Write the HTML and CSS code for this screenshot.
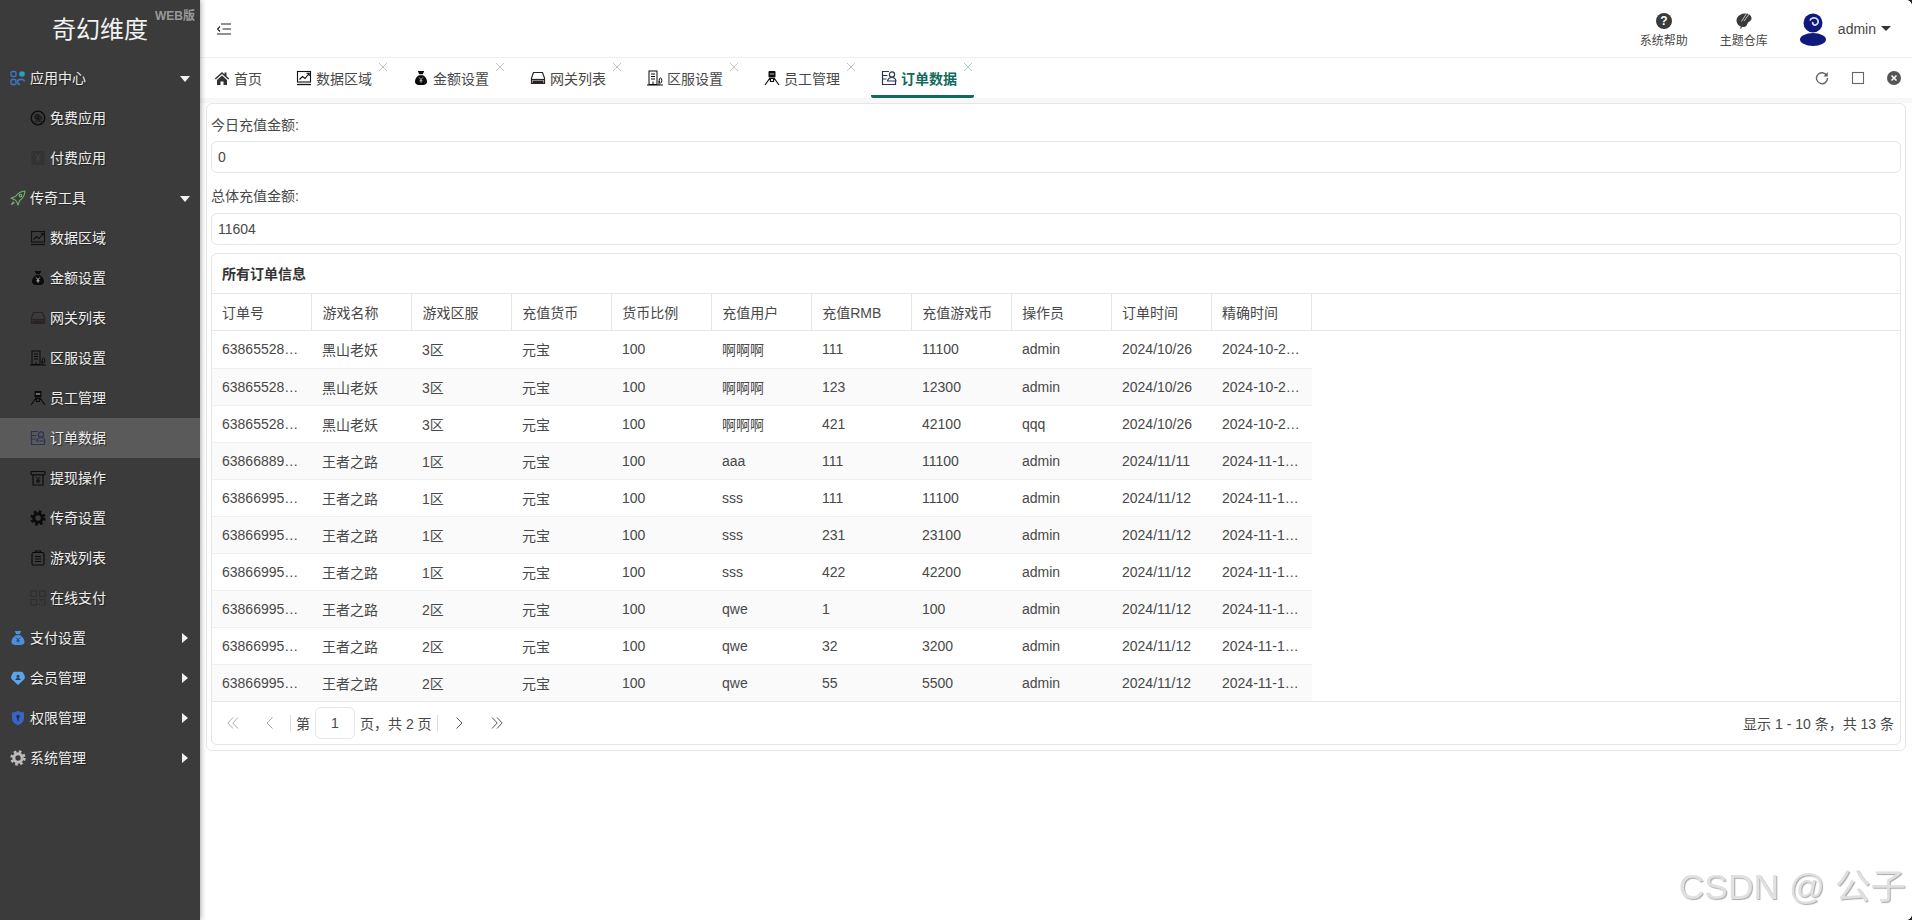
FILE: index.html
```html
<!DOCTYPE html>
<html lang="zh-CN">
<head>
    <meta charset="UTF-8">
    <title>奇幻维度 - 订单数据</title>
    <link rel="stylesheet" href="styles.css">
</head>
<body>
    <svg class="icon-defs" xmlns="http://www.w3.org/2000/svg">
        <symbol id="i-apps" viewBox="0 0 16 16"><g fill="none" stroke="#3d78c9" stroke-width="1.4"><rect x="1" y="1.5" width="5" height="5" rx="1.4"/><rect x="1" y="9.5" width="5" height="5" rx="1.4"/><path d="M10 14.5a2.5 2.5 0 0 1 0-5h2.5a2.5 2.5 0 0 1 2 2"/></g><circle cx="12" cy="4" r="2.8" fill="#2d9fc4"/></symbol>
        <symbol id="i-free" viewBox="0 0 16 16"><circle cx="8" cy="8" r="6.8" fill="none" stroke="#0b0b0b" stroke-width="1.3"/><text x="8" y="11" font-size="8.5" text-anchor="middle" fill="#0b0b0b">免</text></symbol>
        <symbol id="i-paid" viewBox="0 0 16 16"><rect x="1.5" y="1" width="13" height="14" fill="#333"/><path d="M5.5 4 8 7.5 10.500 4M8 7.500V12M5.800 9h4.400" fill="none" stroke="#444" stroke-width="1"/></symbol>
        <symbol id="i-rocket" viewBox="0 0 16 16"><g fill="none" stroke="#6fb56f" stroke-width="1.1" stroke-linejoin="round"><path d="M15 1c-4 .2-7 2-9.300 5.300L1 8.200l3.500 1.200 2.200 2.200L8 15l1.800-4.600C13 8 14.800 5 15 1z"/><circle cx="10.500" cy="5.500" r="1.300"/><path d="M3.500 11.500 1.500 14.500 4.500 12.500"/></g></symbol>
        <symbol id="i-chart" viewBox="0 0 16 16"><g fill="none" stroke="#111" stroke-width="1.100"><rect x="1.500" y="1.500" width="13" height="10.500"/><path d="M1 14.500h14" stroke-width="1.300"/><path d="M3.500 9.500 6.500 6.500 9 8.500 13 3.500M10.500 3.300 13.200 3.300 13.200 6"/></g></symbol>
        <symbol id="i-bag" viewBox="0 0 16 16"><path fill="#0c0c0c" d="M4.800 1h6.400L9.800 4.300H6.200zM6 5.200h4c2.600 1.600 4 4 4 6.200 0 2.800-2 3.600-6 3.600s-6-.8-6-3.600c0-2.200 1.400-4.600 4-6.200z"/><path d="M6.200 7.500 8 9.700l1.800-2.200M8 9.700v3M6.500 10.800h3" fill="none" stroke="#ddd" stroke-width=".8"/></symbol>
        <symbol id="i-drive" viewBox="0 0 16 16"><g fill="none" stroke="#2a2323" stroke-width="1.200"><path d="M3.500 2.500h9l2 5.500v5.500h-13V8z"/><path d="M1.500 9.500h13"/></g><rect x="2.500" y="10.500" width="11" height="2.500" fill="#2a2323"/></symbol>
        <symbol id="i-building" viewBox="0 0 16 16"><g fill="none" stroke="#0a0a0a" stroke-width="1"><rect x="2" y="1" width="8" height="13.500"/><path d="M0 15h16M4 4h4M4 6.500h4M4 9h4M6 11.500v3M12 15v-4"/><ellipse cx="13.500" cy="10.500" rx="1.300" ry="2.500"/></g></symbol>
        <symbol id="i-person" viewBox="0 0 16 16"><rect x="4.500" y="1" width="7" height="6.500" rx="1" fill="#0c0c0c"/><rect x="5.800" y="3" width="4.400" height="2" fill="#666"/><g fill="none" stroke="#0c0c0c" stroke-width="1.200"><path d="M6 8 1 15M10 8l5 7M6.500 8.500h3v3h-3z"/></g></symbol>
        <symbol id="i-order" viewBox="0 0 16 16"><g fill="none" stroke="#2b3350" stroke-width="1.200"><path d="M8 1.500H1.500v13h13V11"/><path d="M1.500 5.500h5M1.500 9h4"/><circle cx="11" cy="4.500" r="2.600"/><path d="M6.500 11c.5-2.200 2.300-3.500 4.500-3.500s3.600 1.300 4 3.500z"/></g></symbol>
        <symbol id="i-cash" viewBox="0 0 16 16"><g fill="none" stroke="#0c0c0c" stroke-width="1.200"><rect x="1" y="1.500" width="14" height="3.300" rx="1"/><path d="M3 5v10h10V5"/><path d="M5.800 6.800 8 9.300l2.200-2.500M8 9.300v3.500M6 10.300h4M6 12h4" stroke-width=".9"/></g></symbol>
        <symbol id="i-gear" viewBox="0 0 16 16"><circle cx="8" cy="8" r="4.200" fill="none" stroke="currentColor" stroke-width="3"/><circle cx="8" cy="8" r="6.400" fill="none" stroke="currentColor" stroke-width="2.600" stroke-dasharray="2.600 2.430"/></symbol>
        <symbol id="i-clip" viewBox="0 0 16 16"><g fill="none" stroke="#0c0c0c" stroke-width="1.200"><rect x="2" y="2.500" width="12" height="12.500" rx="1.500"/><path d="M5.500 2.500h5V1h-5zM5 6.500h6M5 9h6M5 11.500h6"/></g></symbol>
        <symbol id="i-grid" viewBox="0 0 16 16"><g fill="none" stroke="#2e2e2e" stroke-width="1.100"><rect x="1" y="1" width="5.500" height="5.500"/><rect x="9.500" y="1" width="5.500" height="5.500"/><rect x="1" y="9.500" width="5.500" height="5.500"/><path d="M9.500 9.500h2v2M13 9.500h2v5.500h-3M9.500 13v2"/></g></symbol>
        <symbol id="i-paybag" viewBox="0 0 16 16"><path fill="#4a8fe0" d="M4.800 1h6.400L9.800 4.300H6.200zM5.800 5.200h4.400c2.600 1.600 4.300 4.300 4.300 6.500 0 2.700-2 3.300-6.500 3.300s-6.500-.6-6.500-3.300c0-2.200 1.700-4.900 4.300-6.500z"/><path d="M6 7.500 8 10l2-2.500M8 10v2.500M6.300 10.800h3.400" fill="none" stroke="#2a3f5e" stroke-width=".9"/></symbol>
        <symbol id="i-member" viewBox="0 0 16 16"><path fill="#5aa6ee" d="M8 15 2 9.500C.8 8.300 1 6.800 1.500 5.500L3 2.800C3.400 2 4 1.800 4.800 1.800h6.400c.8 0 1.400.2 1.800 1l1.500 2.700c.5 1.300.7 2.800-.5 4z"/><circle cx="8" cy="6.300" r="1.500" fill="#2d3d50"/><path d="M5.300 10c.4-1.300 1.400-1.900 2.700-1.900s2.300.6 2.700 1.900z" fill="#2d3d50"/></symbol>
        <symbol id="i-shield" viewBox="0 0 16 16"><path fill="#3a63c8" d="M8 .8c1.800 1 3.800 1.500 6 1.700v6.300c0 3-2.500 5.200-6 6.500-3.500-1.300-6-3.500-6-6.500V2.500C4.200 2.300 6.200 1.800 8 .8z"/><circle cx="8" cy="6.500" r="1.800" fill="#26304e"/><path d="M7.200 7.500h1.600v3.300H7.200z" fill="#26304e"/></symbol>
    </svg>

    <div class="app">
        <aside class="sidebar">
            <div class="logo">
                <span class="logo-name">奇幻维度</span>
                <span class="logo-tag">WEB版</span>
            </div>
            <nav>
                <a class="menu-item parent"><svg class="menu-icon"><use href="#i-apps"/></svg>应用中心<i class="arrow-down"></i></a>
                <a class="menu-item child"><svg class="menu-icon"><use href="#i-free"/></svg>免费应用</a>
                <a class="menu-item child"><svg class="menu-icon"><use href="#i-paid"/></svg>付费应用</a>
                <a class="menu-item parent"><svg class="menu-icon"><use href="#i-rocket"/></svg>传奇工具<i class="arrow-down"></i></a>
                <a class="menu-item child"><svg class="menu-icon"><use href="#i-chart"/></svg>数据区域</a>
                <a class="menu-item child"><svg class="menu-icon"><use href="#i-bag"/></svg>金额设置</a>
                <a class="menu-item child"><svg class="menu-icon"><use href="#i-drive"/></svg>网关列表</a>
                <a class="menu-item child"><svg class="menu-icon"><use href="#i-building"/></svg>区服设置</a>
                <a class="menu-item child"><svg class="menu-icon"><use href="#i-person"/></svg>员工管理</a>
                <a class="menu-item child active"><svg class="menu-icon"><use href="#i-order"/></svg>订单数据</a>
                <a class="menu-item child"><svg class="menu-icon"><use href="#i-cash"/></svg>提现操作</a>
                <a class="menu-item child"><svg class="menu-icon dark-gear"><use href="#i-gear"/></svg>传奇设置</a>
                <a class="menu-item child"><svg class="menu-icon"><use href="#i-clip"/></svg>游戏列表</a>
                <a class="menu-item child"><svg class="menu-icon"><use href="#i-grid"/></svg>在线支付</a>
                <a class="menu-item parent"><svg class="menu-icon"><use href="#i-paybag"/></svg>支付设置<i class="arrow-right"></i></a>
                <a class="menu-item parent"><svg class="menu-icon"><use href="#i-member"/></svg>会员管理<i class="arrow-right"></i></a>
                <a class="menu-item parent"><svg class="menu-icon"><use href="#i-shield"/></svg>权限管理<i class="arrow-right"></i></a>
                <a class="menu-item parent"><svg class="menu-icon light-gear"><use href="#i-gear"/></svg>系统管理<i class="arrow-right"></i></a>
            </nav>
        </aside>

        <div class="main">
            <header class="topbar">
                <svg class="fold-icon" viewBox="0 0 14 12"><path d="M4 1h10M5.500 6H14M0 11h14M3 3.500.5 6 3 8.500" fill="none" stroke="#222" stroke-width="1.200"/></svg>
                <div class="topbar-right">
                    <a class="top-link">
                        <span class="help-icon">?</span>
                        <span>系统帮助</span>
                    </a>
                    <a class="top-link">
                        <svg class="top-icon" viewBox="0 0 16 16"><path fill="#3a3a3a" d="M8 .5c3.800-.6 7.500 1.200 7.500 4.800 0 2.900-2.700 3.200-3.700 4.700-.8 1.200-.6 3.200-2.800 3.800C5 14.800.5 11.800.5 7.500.5 3.900 4.200 1 8 .5z"/><path d="M13.500.5 8 8M10.500.5 5.500 8.500" fill="none" stroke="#fff" stroke-width=".7"/><path d="M8 9 4.500 15.500" fill="none" stroke="#3a3a3a" stroke-width="1.200"/></svg>
                        <span>主题仓库</span>
                    </a>
                    <div class="user-box">
                        <svg class="avatar" viewBox="0 0 26 33"><circle cx="13" cy="10" r="9.500" fill="#10197c"/><path d="M10 7.500c1-3 5.500-3.500 7.500-1 1.500 2 .5 5-2 5.500-2 .3-3.500-1.500-2.500-3" fill="none" stroke="#d7dcf0" stroke-width="1.800"/><ellipse cx="13" cy="26.500" rx="13" ry="6.500" fill="#10197c"/></svg>
                        <span class="user-name">admin</span>
                        <i class="user-caret"></i>
                    </div>
                </div>
            </header>

            <div class="tabbar">
                <a class="tab home-tab"><svg class="tab-icon" viewBox="0 0 16 16"><path fill="#333" d="M8 2 .8 8.500l1 1L8 4l6.200 5.500 1-1-2.700-2.400V2.500h-2v1.800zM3 10v5h3.500v-3.500h3V15H13v-5L8 5.500z"/></svg>首页</a>
                <a class="tab"><svg class="tab-icon"><use href="#i-chart"/></svg>数据区域<i class="tab-close"></i></a>
                <a class="tab"><svg class="tab-icon"><use href="#i-bag"/></svg>金额设置<i class="tab-close"></i></a>
                <a class="tab"><svg class="tab-icon"><use href="#i-drive"/></svg>网关列表<i class="tab-close"></i></a>
                <a class="tab"><svg class="tab-icon"><use href="#i-building"/></svg>区服设置<i class="tab-close"></i></a>
                <a class="tab"><svg class="tab-icon"><use href="#i-person"/></svg>员工管理<i class="tab-close"></i></a>
                <a class="tab active"><svg class="tab-icon"><use href="#i-order"/></svg>订单数据<i class="tab-close"></i></a>
                <div class="tab-tools">
                    <span class="tool"><svg viewBox="0 0 14 14"><path d="M11.800 4.500A5.500 5.500 0 1 0 12.500 7" fill="none" stroke="#666" stroke-width="1.400"/><path d="M12.800 1v4.500H8.300z" fill="#666"/></svg></span>
                    <span class="tool"><svg viewBox="0 0 14 14"><rect x="1.500" y="1.500" width="11" height="11" fill="none" stroke="#666" stroke-width="1.100"/></svg></span>
                    <span class="tool"><svg viewBox="0 0 14 14"><circle cx="7" cy="7" r="7" fill="#555"/><path d="M4.500 4.500l5 5M9.500 4.500l-5 5" stroke="#fff" stroke-width="1.500"/></svg></span>
                </div>
            </div>

            <section class="content">
                <div class="outer-card">
                    <div class="field">
                        <label>今日充值金额:</label>
                        <div class="field-value">0</div>
                    </div>
                    <div class="field">
                        <label>总体充值金额:</label>
                        <div class="field-value">11604</div>
                    </div>

                    <div class="table-card">
                        <div class="table-title">所有订单信息</div>
                        <div class="table-head">
                            <table>
                                <tr><th>订单号</th><th>游戏名称</th><th>游戏区服</th><th>充值货币</th><th>货币比例</th><th>充值用户</th><th>充值RMB</th><th>充值游戏币</th><th>操作员</th><th>订单时间</th><th>精确时间</th></tr>
                            </table>
                        </div>
                        <div class="table-body">
                            <table>
                                <tr><td>63865528…</td><td>黑山老妖</td><td>3区</td><td>元宝</td><td>100</td><td>啊啊啊</td><td>111</td><td>11100</td><td>admin</td><td>2024/10/26</td><td>2024-10-2…</td></tr>
                                <tr><td>63865528…</td><td>黑山老妖</td><td>3区</td><td>元宝</td><td>100</td><td>啊啊啊</td><td>123</td><td>12300</td><td>admin</td><td>2024/10/26</td><td>2024-10-2…</td></tr>
                                <tr><td>63865528…</td><td>黑山老妖</td><td>3区</td><td>元宝</td><td>100</td><td>啊啊啊</td><td>421</td><td>42100</td><td>qqq</td><td>2024/10/26</td><td>2024-10-2…</td></tr>
                                <tr><td>63866889…</td><td>王者之路</td><td>1区</td><td>元宝</td><td>100</td><td>aaa</td><td>111</td><td>11100</td><td>admin</td><td>2024/11/11</td><td>2024-11-1…</td></tr>
                                <tr><td>63866995…</td><td>王者之路</td><td>1区</td><td>元宝</td><td>100</td><td>sss</td><td>111</td><td>11100</td><td>admin</td><td>2024/11/12</td><td>2024-11-1…</td></tr>
                                <tr><td>63866995…</td><td>王者之路</td><td>1区</td><td>元宝</td><td>100</td><td>sss</td><td>231</td><td>23100</td><td>admin</td><td>2024/11/12</td><td>2024-11-1…</td></tr>
                                <tr><td>63866995…</td><td>王者之路</td><td>1区</td><td>元宝</td><td>100</td><td>sss</td><td>422</td><td>42200</td><td>admin</td><td>2024/11/12</td><td>2024-11-1…</td></tr>
                                <tr><td>63866995…</td><td>王者之路</td><td>2区</td><td>元宝</td><td>100</td><td>qwe</td><td>1</td><td>100</td><td>admin</td><td>2024/11/12</td><td>2024-11-1…</td></tr>
                                <tr><td>63866995…</td><td>王者之路</td><td>2区</td><td>元宝</td><td>100</td><td>qwe</td><td>32</td><td>3200</td><td>admin</td><td>2024/11/12</td><td>2024-11-1…</td></tr>
                                <tr><td>63866995…</td><td>王者之路</td><td>2区</td><td>元宝</td><td>100</td><td>qwe</td><td>55</td><td>5500</td><td>admin</td><td>2024/11/12</td><td>2024-11-1…</td></tr>
                            </table>
                        </div>
                        <div class="pager">
                            <svg class="page-btn first-btn" viewBox="0 0 12 12"><path d="M6 .5.800 6 6 11.500M11 .5 5.800 6 11 11.500" fill="none" stroke="#aaa" stroke-width="1"/></svg>
                            <svg class="page-btn prev-btn" viewBox="0 0 12 12"><path d="M8.500.5 3 6l5.500 5.500" fill="none" stroke="#aaa" stroke-width="1"/></svg>
                            <span class="page-sep"></span>
                            <span>第</span>
                            <span class="page-input">1</span>
                            <span>页，共 2 页</span>
                            <span class="page-sep"></span>
                            <svg class="page-btn next-btn" viewBox="0 0 12 12"><path d="M3.500.5 9 6l-5.500 5.500" fill="none" stroke="#555" stroke-width="1"/></svg>
                            <svg class="page-btn last-btn" viewBox="0 0 12 12"><path d="M1 .5 6.200 6 1 11.500M6 .5 11.200 6 6 11.500" fill="none" stroke="#555" stroke-width="1"/></svg>
                            <span class="page-info">显示 1 - 10 条，共 13 条</span>
                        </div>
                    </div>
                </div>
            </section>
        </div>
    </div>

    <div class="watermark">CSDN @ 公子</div>
    <i class="corner corner-top"></i>
    <i class="corner corner-bottom"></i>
</body>
</html>
```

FILE: styles.css
```css
* {
    box-sizing: border-box;
}

html, body {
    height: 100%;
}

body {
    margin: 0;
    overflow: hidden;
    background: #fff;
    color: #484848;
    font-family: "Liberation Sans", "Noto Sans CJK SC", sans-serif;
    font-size: 14px;
}

.icon-defs {
    display: none;
}

.app {
    display: flex;
    height: 100vh;
}

/* 左侧菜单 */
.sidebar {
    width: 200px;
    flex-shrink: 0;
    background: #3b3b3b;
    box-shadow: 0 0 6px rgba(0, 0, 0, 0.45);
    position: relative;
    z-index: 2;
}

.logo {
    position: relative;
    height: 58px;
    padding-top: 13px;
    text-align: center;
}

.logo-name {
    color: #f2f2f2;
    font-size: 24px;
    line-height: 34px;
}

.logo-tag {
    position: absolute;
    top: 6px;
    right: 5px;
    color: #999;
    font-size: 12px;
    font-weight: bold;
}

.menu-item {
    position: relative;
    display: flex;
    align-items: center;
    height: 40px;
    padding-bottom: 2px;
    color: #eee;
    text-shadow: 1px 1px 1px #222;
}

.menu-item.parent {
    padding-left: 10px;
}

.menu-item.child {
    padding-left: 30px;
}

.menu-item.active {
    background: #5a5a5a;
}

.menu-icon {
    width: 16px;
    height: 16px;
    margin: 2px 4px 0 0;
    flex-shrink: 0;
}

.dark-gear {
    color: #0c0c0c;
}

.light-gear {
    color: #bbb;
}

.arrow-down {
    position: absolute;
    right: 10px;
    top: 18px;
    border-left: 5px solid transparent;
    border-right: 5px solid transparent;
    border-top: 6px solid #f2f2f2;
}

.arrow-right {
    position: absolute;
    right: 12px;
    top: 15px;
    border-top: 5px solid transparent;
    border-bottom: 5px solid transparent;
    border-left: 6px solid #f2f2f2;
}

.main {
    flex: 1;
    min-width: 0;
    display: flex;
    flex-direction: column;
}

/* 顶部栏 */
.topbar {
    height: 58px;
    flex-shrink: 0;
    display: flex;
    align-items: center;
    padding-left: 17px;
    border-bottom: 1px solid #f0f0f0;
}

.fold-icon {
    width: 14px;
    height: 12px;
    margin-top: 1px;
}

.topbar-right {
    display: flex;
    align-items: center;
    margin-left: auto;
    padding-right: 21px;
    height: 100%;
}

.top-link {
    width: 80px;
    display: flex;
    flex-direction: column;
    align-items: center;
    gap: 5px;
    padding-top: 3px;
    font-size: 12px;
    line-height: 14px;
}

.help-icon {
    width: 16px;
    height: 16px;
    border-radius: 50%;
    background: #3a3a3a;
    color: #fff;
    font-size: 12px;
    font-weight: bold;
    line-height: 16px;
    text-align: center;
}

.top-icon {
    width: 16px;
    height: 16px;
}

.user-box {
    display: flex;
    align-items: center;
    margin-left: 16px;
}

.avatar {
    width: 26px;
    height: 33px;
    margin: 1px 12px 0 0;
}

.user-caret {
    margin-left: 5px;
    border-left: 5px solid transparent;
    border-right: 5px solid transparent;
    border-top: 5px solid #333;
}

/* 标签栏 */
.tabbar {
    height: 40px;
    flex-shrink: 0;
    display: flex;
    align-items: center;
    gap: 14px;
    padding-left: 4px;
}

.tab {
    position: relative;
    display: flex;
    align-items: center;
    width: 103px;
    height: 40px;
    padding-left: 11px;
}

.home-tab {
    width: 68px;
}

.tab-icon {
    width: 16px;
    height: 16px;
    margin: 0 4px 0 -1px;
    flex-shrink: 0;
}

.tab.active {
    color: #0f6b5c;
    font-weight: bold;
    border-bottom: 3px solid #0f6b5c;
    border-radius: 2px;
    padding-top: 3px;
}

.tab-close {
    position: absolute;
    top: 5px;
    right: 2px;
    width: 8px;
    height: 8px;
    background:
        linear-gradient(45deg, transparent 45%, #c4c4c4 45%, #c4c4c4 55%, transparent 55%),
        linear-gradient(-45deg, transparent 45%, #c4c4c4 45%, #c4c4c4 55%, transparent 55%);
}

.tab.active .tab-close {
    background:
        linear-gradient(45deg, transparent 45%, #a5cfc8 45%, #a5cfc8 55%, transparent 55%),
        linear-gradient(-45deg, transparent 45%, #a5cfc8 45%, #a5cfc8 55%, transparent 55%);
}

.tab-tools {
    display: flex;
    margin-left: auto;
}

.tool {
    width: 36px;
    display: flex;
    justify-content: center;
}

.tool svg {
    width: 14px;
    height: 14px;
}

/* 内容区 */
.content {
    flex: 1;
    padding: 5px 6px 0;
    background: linear-gradient(#f7f7f7, #f7f7f7) no-repeat top / 100% 5px;
}

.outer-card {
    background: #fff;
    border: 1px solid #e6e6e6;
    border-radius: 6px;
    padding: 0 4px 5px;
}

.field label {
    display: block;
    height: 37px;
    padding-top: 12px;
    line-height: 18px;
}

.field + .field label {
    height: 40px;
    padding-top: 14px;
}

.field-value {
    height: 32px;
    line-height: 30px;
    padding-left: 6px;
    border: 1px solid #e6e6e6;
    border-radius: 6px;
}

.table-card {
    margin-top: 8px;
    border: 1px solid #e6e6e6;
    border-radius: 6px;
}

.table-title {
    height: 40px;
    line-height: 40px;
    padding-left: 10px;
    color: #333;
    font-weight: bold;
    border-bottom: 1px solid #e6e6e6;
}

.table-card table {
    width: 1100px;
    table-layout: fixed;
    border-collapse: collapse;
}

.table-head {
    border-bottom: 1px solid #e6e6e6;
}

.table-body {
    border-bottom: 1px solid #e6e6e6;
}

th {
    height: 36px;
    padding: 0 10px;
    font-weight: normal;
    text-align: left;
    border-right: 1px solid #e6e6e6;
}

td {
    height: 37px;
    padding: 0 10px;
    white-space: nowrap;
    border-bottom: 1px solid #f0f0f0;
}

.table-body tr:last-child td {
    border-bottom: none;
}

.table-body tr:nth-child(even) td {
    background: #fafafa;
}

/* 分页 */
.pager {
    display: flex;
    align-items: center;
    height: 42px;
    padding: 0 6px 0 15px;
}

.page-btn {
    width: 12px;
    height: 12px;
    flex-shrink: 0;
}

.prev-btn {
    margin-left: 25px;
}

.page-sep {
    width: 1px;
    height: 16px;
    background: #ddd;
    margin: 0 5px 0 14px;
}

.page-input {
    width: 40px;
    height: 32px;
    line-height: 30px;
    margin: 0 5px;
    text-align: center;
    border: 1px solid #e6e6e6;
    border-radius: 6px;
}

.page-input + span + .page-sep {
    margin: 0 15px 0 5px;
}

.last-btn {
    margin-left: 26px;
}

.page-info {
    margin-left: auto;
}

/* 截图水印和窗口圆角 */
.watermark {
    position: fixed;
    right: 6px;
    bottom: 13px;
    color: #e0e0e0;
    font-size: 35.500px;
    line-height: 40px;
    text-shadow: 1px 1px 1px #a8a8a8;
}

.corner {
    position: fixed;
    right: 0;
    width: 5px;
    height: 5px;
}

.corner-top {
    top: 0;
    background: radial-gradient(circle at 0 100%, transparent 4.500px, #222 5px);
}

.corner-bottom {
    bottom: 0;
    background: radial-gradient(circle at 0 0, transparent 4.500px, #222 5px);
}
```
